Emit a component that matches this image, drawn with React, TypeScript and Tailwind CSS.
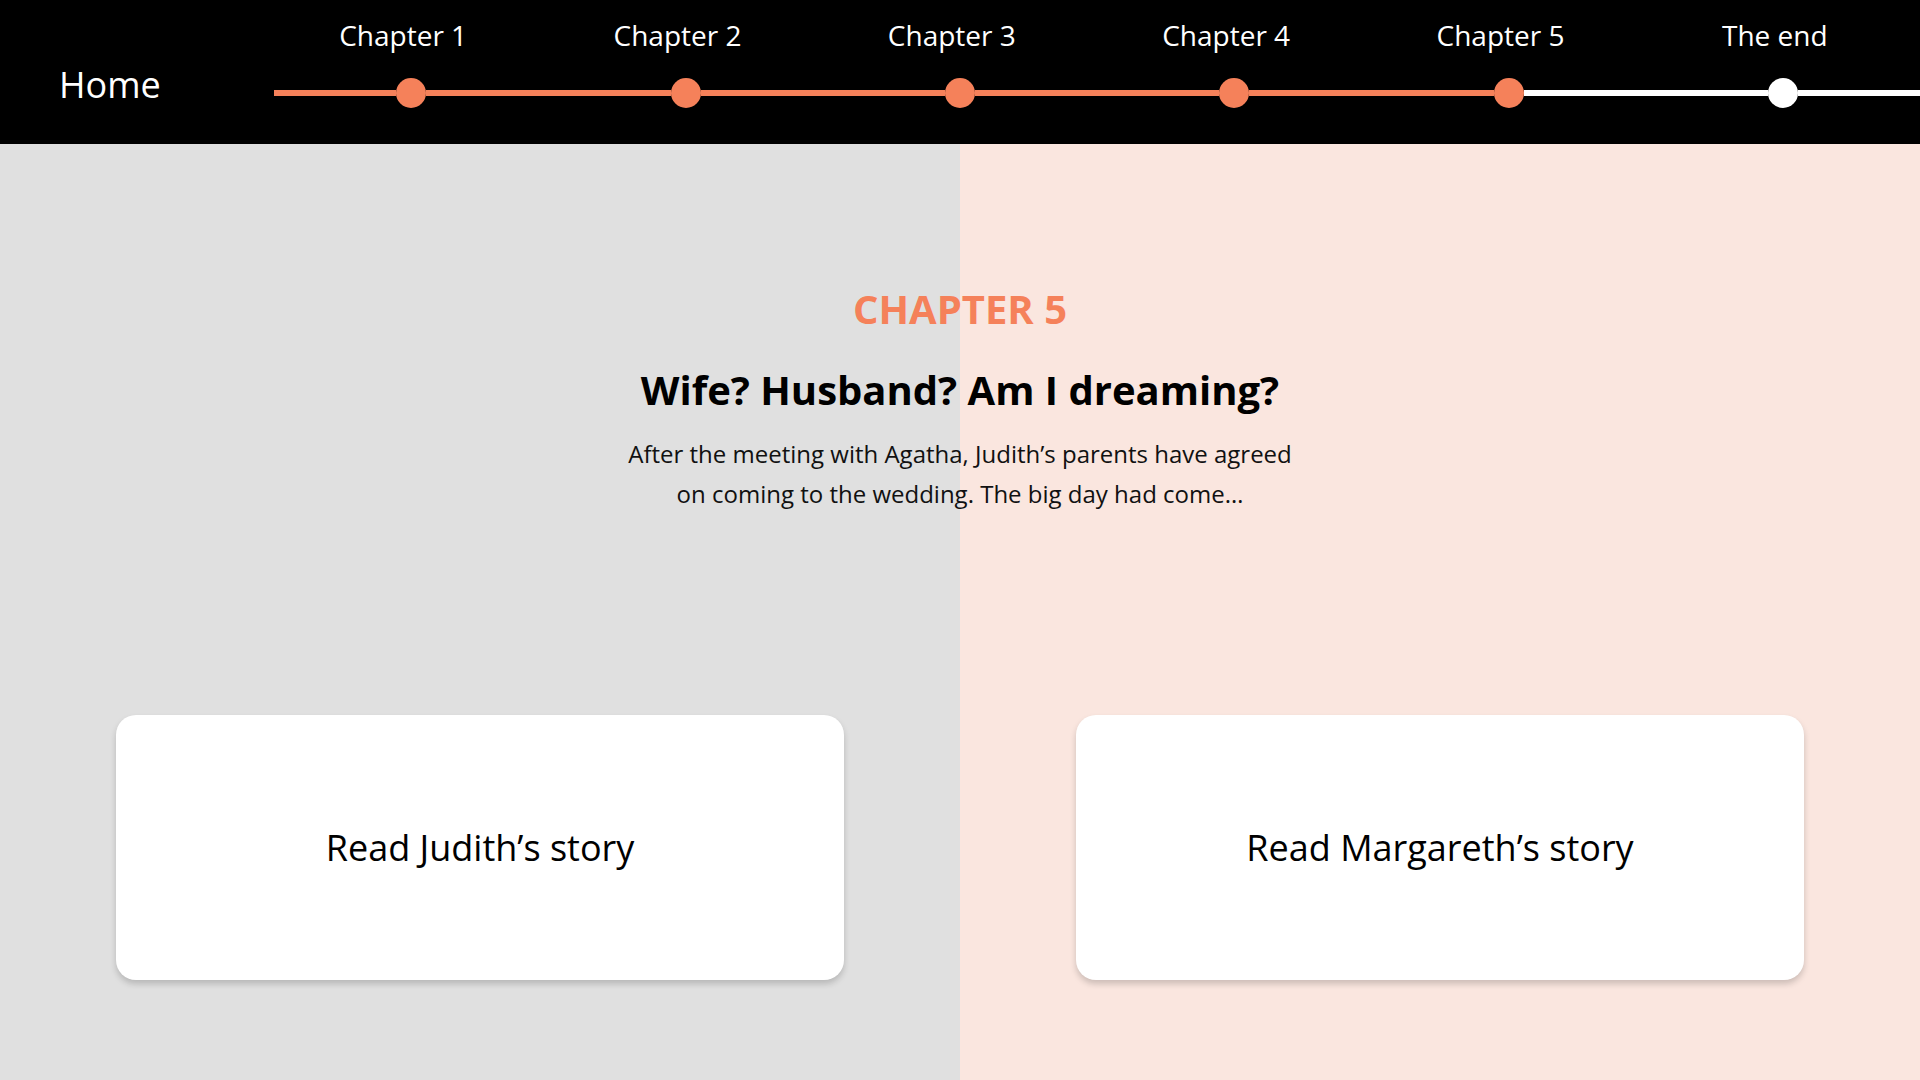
const steps = [
  { label: "Chapter 1", done: true },
  { label: "Chapter 2", done: true },
  { label: "Chapter 3", done: true },
  { label: "Chapter 4", done: true },
  { label: "Chapter 5", done: true, current: true },
  { label: "The end", done: false },
];

function Timeline() {
  return (
    <div className="flex-1 pt-[17px]">
      <div className="grid grid-cols-6">
        {steps.map((s) => (
          <div key={s.label} className="pr-4 text-center text-[28px] leading-[36px] text-white">
            {s.label}
          </div>
        ))}
      </div>
      <div className="mt-[25px] grid grid-cols-6">
        {steps.map((s, i) => {
          const leftOrange = s.done;
          const rightOrange = s.done && !s.current && i < steps.length - 1;
          return (
            <div key={s.label} className="flex h-[30px] items-center">
              <div className={`h-[6px] flex-1 ${leftOrange ? "bg-[#f5815a]" : "bg-white"}`} />
              <div className={`h-[30px] w-[30px] shrink-0 rounded-full ${s.done ? "bg-[#f5815a]" : "bg-white"}`} />
              <div className={`h-[6px] flex-1 ${rightOrange ? "bg-[#f5815a]" : "bg-white"}`} />
            </div>
          );
        })}
      </div>
    </div>
  );
}

function StoryCard({ title }: { title: string }) {
  return (
    <div className="flex justify-center">
      <button className="flex h-[265px] w-[728px] items-center justify-center rounded-[20px] bg-white text-[36px] text-black shadow-[0_4px_6px_rgba(0,0,0,0.18)]">
        {title}
      </button>
    </div>
  );
}

export default function App() {
  return (
    <div className="flex min-h-screen flex-col font-['Open_Sans',sans-serif]">
      <header className="flex h-[144px] bg-black">
        <div className="w-[274px] shrink-0 pl-[59px] pt-[62px] text-[36px] leading-[46px] text-white">
          Home
        </div>
        <Timeline />
      </header>

      <main className="flex-1 bg-[linear-gradient(to_right,#e0e0e0_50%,#fae6df_50%)] pb-[100px]">
        <div className="flex flex-col items-center pt-[141px] text-center">
          <p className="text-[40px] font-bold leading-[48px] text-[#f5815a]">CHAPTER 5</p>
          <h1 className="mt-[33px] text-[40px] font-bold leading-[48px] text-black">
            Wife? Husband? Am I dreaming?
          </h1>
          <p className="mt-[20px] w-[680px] text-[24px] leading-[40px] text-[#111]">
            After the meeting with Agatha, Judith’s parents have agreed on coming to the wedding. The big day had come…
          </p>
        </div>

        <div className="mt-[201px] grid grid-cols-2">
          <StoryCard title="Read Judith’s story" />
          <StoryCard title="Read Margareth’s story" />
        </div>
      </main>
    </div>
  );
}
